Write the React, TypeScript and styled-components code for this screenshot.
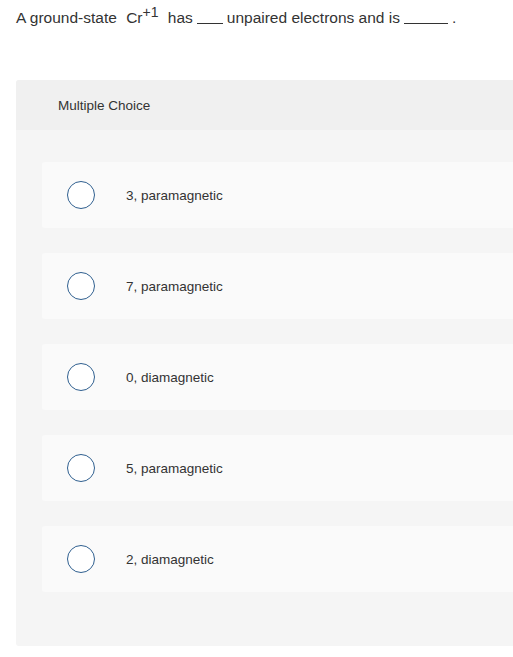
import { createGlobalStyle } from "styled-components";
import styled from "styled-components";

const GlobalStyle = createGlobalStyle`
  html, body {
    margin: 0;
    padding: 0;
    background: #ffffff;
    overflow: hidden;
  }
  body {
    font-family: "Liberation Sans", Arial, sans-serif;
    color: #333333;
  }
`;

const Page = styled.div`
  padding: 8px 0 0 16px;
`;

const Question = styled.p`
  margin: 0;
  font-size: 15.5px;
  line-height: 20px;
  color: #333333;
`;

const Formula = styled.span`
  margin-left: 5px;
  margin-right: 5px;
`;

const Sup = styled.sup`
  font-size: 14px;
  vertical-align: 6px;
  line-height: 0;
`;

const Blank = styled.span<{ $width: number }>`
  display: inline-block;
  width: ${(p) => p.$width}px;
  border-bottom: 1px solid #333333;
  margin: 0 4px;
  vertical-align: -1px;
`;

const Panel = styled.section`
  margin-top: 52px;
  background: #f5f5f5;
  border-radius: 3px 0 0 3px;
  padding-bottom: 54px;
`;

const PanelHeader = styled.div`
  height: 50px;
  display: flex;
  align-items: center;
  padding-left: 42px;
  background: #f0f0f0;
  border-radius: 3px 0 0 0;
  font-size: 13.5px;
  color: #333333;
`;

const Options = styled.ul`
  list-style: none;
  margin: 0;
  padding: 32px 0 0 26px;
  display: flex;
  flex-direction: column;
  gap: 25px;
`;

const Option = styled.li`
  height: 66px;
  display: flex;
  align-items: center;
  background: #fafafa;
  border-radius: 3px 0 0 3px;
  padding-left: 25px;
`;

const Radio = styled.span`
  width: 26px;
  height: 26px;
  border: 1.5px solid #2f5f8f;
  border-radius: 50%;
  background: #ffffff;
  flex-shrink: 0;
`;

const Label = styled.span`
  margin-left: 31px;
  font-size: 13.5px;
  color: #333333;
`;

const choices = [
  "3, paramagnetic",
  "7, paramagnetic",
  "0, diamagnetic",
  "5, paramagnetic",
  "2, diamagnetic",
];

export default function App() {
  return (
    <>
      <GlobalStyle />
      <Page>
        <Question>
          A ground-state
          <Formula>
            {" "}Cr<Sup>+1</Sup>
          </Formula>{" "}
          has<Blank $width={26} />unpaired electrons and is<Blank $width={44} />.
        </Question>
        <Panel>
          <PanelHeader>Multiple Choice</PanelHeader>
          <Options>
            {choices.map((c) => (
              <Option key={c}>
                <Radio />
                <Label>{c}</Label>
              </Option>
            ))}
          </Options>
        </Panel>
      </Page>
    </>
  );
}
